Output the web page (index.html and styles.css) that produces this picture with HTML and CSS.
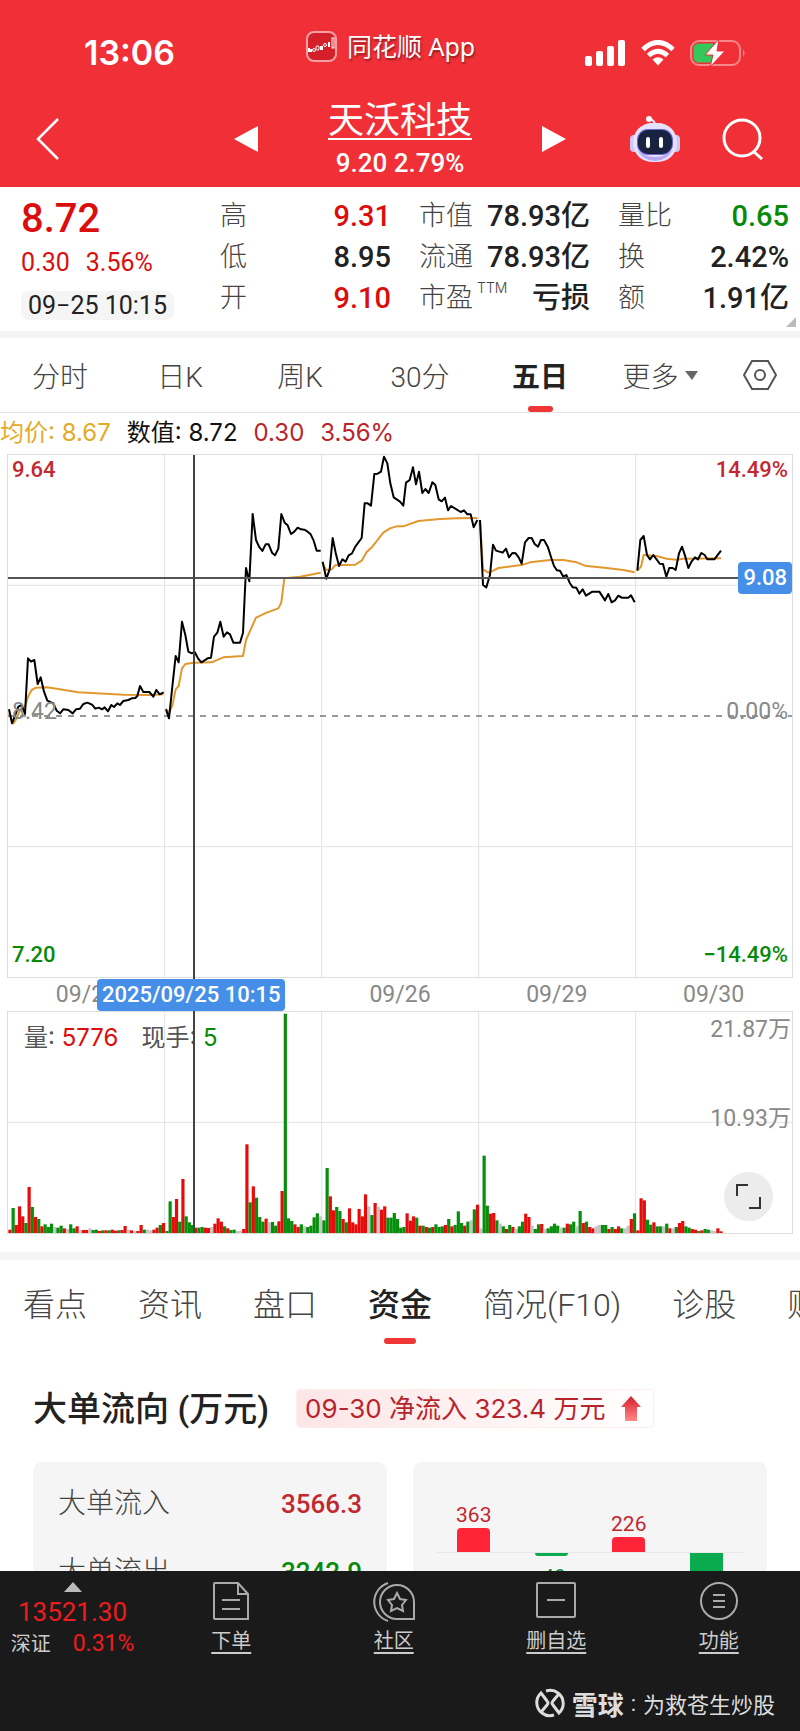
FILE: index.html
```html
<!DOCTYPE html>
<html lang="zh-CN">
<head>
  <meta charset="UTF-8" />
  <meta name="viewport" content="width=device-width, initial-scale=1.0"/>
  <title>天沃科技</title>
  <link rel="stylesheet" href="styles.css">
</head>
<body>

  <header class="header">
    <div class="status-bar">
      <div class="clock">13:06</div>
      <div class="app-name">
        <svg width="31" height="31" viewBox="0 0 31 31">
          <rect x="1" y="1" width="29" height="29" rx="7" fill="#d3202a" stroke="#f7a0a3" stroke-width="2"/>
          <path d="M3 17v4M5 18v3M23 11v5" stroke="#fff" stroke-width="2"/>
          <g fill="none" stroke="#fff" stroke-width="1"><circle cx="8" cy="19" r="1.5"/><rect x="10" y="15" width="3" height="4" rx="1"/><circle cx="19" cy="14" r="1.5"/><rect x="26" y="7" width="2" height="10"/></g>
          <rect x="14" y="15" width="3" height="4" fill="#fff"/>
        </svg>
        <span>同花顺 App</span>
      </div>
      <div class="status-icons">
        <svg width="41" height="26" viewBox="0 0 41 26" fill="#fff">
          <rect x="0" y="16" width="7" height="10" rx="2"/>
          <rect x="11" y="11" width="7" height="15" rx="2"/>
          <rect x="22" y="6" width="7" height="20" rx="2"/>
          <rect x="33" y="0" width="7" height="26" rx="2"/>
        </svg>
        <svg width="34" height="26" viewBox="0 0 34 26" fill="none" stroke="#fff" stroke-width="5">
          <path d="M2 9.500Q17 -4.500 32 9.500"/>
          <path d="M7.500 15.500Q17 7 26.500 15.500"/>
          <path d="M17 25.500L11.500 19.500Q17 15 22.500 19.500Z" fill="#fff" stroke="none"/>
        </svg>
        <svg width="56" height="28" viewBox="0 0 56 28">
          <rect x="1" y="2" width="49" height="24" rx="8" fill="none" stroke="#f7898d" stroke-width="2"/>
          <path d="M9 4.500H23V23.500H9Q3.500 23.500 3.500 18V10Q3.500 4.500 9 4.500Z" fill="#34c759"/>
          <path d="M53 10Q56 14 53 18Z" fill="#f7898d"/>
          <path d="M29 0L15 16H23L20 28L35 12H27Z" fill="#fff" stroke="#f12f37" stroke-width="1"/>
        </svg>
      </div>
    </div>

    <div class="title-bar">
      <button class="icon-btn" aria-label="返回">
        <svg width="24" height="42" viewBox="0 0 24 42" fill="none" stroke="#fff" stroke-width="2.500"><path d="M22 1L2 21L22 41"/></svg>
      </button>
      <div class="stock">
        <button class="icon-btn" aria-label="上一只">
          <svg width="24" height="26" viewBox="0 0 24 26"><path d="M24 0V26L0 13Z" fill="#fff"/></svg>
        </button>
        <div class="stock-title">
          <h1>天沃科技</h1>
          <p>9.20 2.79%</p>
        </div>
        <button class="icon-btn" aria-label="下一只">
          <svg width="24" height="26" viewBox="0 0 24 26"><path d="M0 0V26L24 13Z" fill="#fff"/></svg>
        </button>
      </div>
      <div class="title-actions">
        <button class="icon-btn" aria-label="助手">
          <svg width="50" height="46" viewBox="0 0 50 46">
            <path d="M25 9Q25 4 19 3" fill="none" stroke="#e9e4ff" stroke-width="2"/>
            <circle cx="19" cy="3" r="3" fill="#fff"/>
            <rect x="0" y="19" width="8" height="17" rx="4" fill="#cfc6f5"/>
            <rect x="42" y="19" width="8" height="17" rx="4" fill="#cfc6f5"/>
            <rect x="3" y="7" width="44" height="39" rx="19" fill="#e6e2fb"/>
            <path d="M7 34Q14 45 25 45Q36 45 43 34Q36 41 25 41Q14 41 7 34Z" fill="#b7a8ef"/>
            <rect x="7" y="13" width="36" height="26" rx="11" fill="#6b63d8"/>
            <rect x="8" y="14" width="34" height="24" rx="10" fill="#17233f"/>
            <rect x="16" y="21" width="4" height="11" rx="2" fill="#fff"/>
            <rect x="29" y="21" width="4" height="11" rx="2" fill="#fff"/>
          </svg>
        </button>
        <button class="icon-btn" aria-label="搜索">
          <svg width="42" height="42" viewBox="0 0 42 42" fill="none" stroke="#fff" stroke-width="3"><circle cx="20" cy="20" r="18"/><path d="M31 33L40 41"/></svg>
        </button>
      </div>
    </div>
  </header>

  <main class="content">
    <section class="quote">
      <div class="quote-main">
        <strong class="red">8.72</strong>
        <p class="red"><span>0.30</span><span>3.56%</span></p>
        <time>09−25 10:15</time>
      </div>
      <dl class="quote-col">
        <div><dt>高</dt><dd class="red">9.31</dd></div>
        <div><dt>低</dt><dd>8.95</dd></div>
        <div><dt>开</dt><dd class="red">9.10</dd></div>
      </dl>
      <dl class="quote-col">
        <div><dt>市值</dt><dd>78.93亿</dd></div>
        <div><dt>流通</dt><dd>78.93亿</dd></div>
        <div><dt>市盈<sup>TTM</sup></dt><dd>亏损</dd></div>
      </dl>
      <dl class="quote-col">
        <div><dt>量比</dt><dd class="green">0.65</dd></div>
        <div><dt>换</dt><dd>2.42%</dd></div>
        <div><dt>额</dt><dd>1.91亿</dd></div>
      </dl>
      <span class="corner"></span>
    </section>

    <nav class="period-tabs">
      <button>分时</button>
      <button>日K</button>
      <button>周K</button>
      <button>30分</button>
      <button class="active">五日</button>
      <button>更多<svg width="13" height="9" viewBox="0 0 13 9"><path d="M0 0H13L7 9Z" fill="#666"/></svg></button>
      <button aria-label="设置">
        <svg width="36" height="32" viewBox="0 0 36 32" fill="none" stroke="#555" stroke-width="2"><path d="M10 2H26L34 16L26 30H10L2 16Z"/><circle cx="18" cy="16" r="5"/></svg>
      </button>
    </nav>

    <p class="legend">
      <span class="orange">均价: 8.67</span>
      <span class="black">数值: 8.72</span>
      <span>0.30</span>
      <span>3.56%</span>
    </p>

    <section class="charts">
      <div class="price-chart">
        <svg id="priceSvg" viewBox="24 45 2352 1566" preserveAspectRatio="none">
          <path class="grid" d="M494 45V1611M965 45V1611M1436 45V1611M1907 45V1611M24 436H2376M24 1220H2376"/>
          <path class="zero" d="M24 828H2376"/>
        </svg>
        <span class="label top left up">9.64</span>
        <span class="label top right up">14.49%</span>
        <span class="label middle left">8.42</span>
        <span class="label middle right">0.00%</span>
        <span class="label bottom left green">7.20</span>
        <span class="label bottom right green">−14.49%</span>
        <div class="cross-h"></div>
        <span class="tag price-tag">9.08</span>
      </div>

      <div class="dates">
        <span>09/24</span>
        <span>09/25</span>
        <span>09/26</span>
        <span>09/29</span>
        <span>09/30</span>
      </div>

      <div class="volume-chart">
        <svg id="volumeSvg" viewBox="24 0 2352 663" preserveAspectRatio="none">
          <path class="grid" d="M494 0V663M965 0V663M1436 0V663M1907 0V663M24 331H2376"/>
        </svg>
        <p class="volume-legend">
          <span>量: <b class="red">5776</b></span>
          <span>现手: <b class="green">5</b></span>
        </p>
        <span class="label vol-max">21.87万</span>
        <span class="label vol-mid">10.93万</span>
        <button class="fullscreen" aria-label="全屏">
          <svg width="25" height="25" viewBox="0 0 25 25" fill="none" stroke="#333" stroke-width="2"><path d="M1 12V1H12M24 13V24H13"/></svg>
        </button>
      </div>
      <div class="cross-v"></div>
      <span class="tag date-tag">2025/09/25 10:15</span>
    </section>

    <nav class="info-tabs">
      <button>看点</button>
      <button>资讯</button>
      <button>盘口</button>
      <button class="active">资金</button>
      <button>简况(F10)</button>
      <button>诊股</button>
      <button>财务</button>
    </nav>

    <section class="flow">
      <div class="flow-head">
        <h2>大单流向 (万元)</h2>
        <p class="badge">
          09-30 净流入 323.4 万元
          <svg width="20" height="26" viewBox="0 0 20 26">
            <defs><linearGradient id="arrow" x1="0" y1="0" x2="0" y2="1"><stop offset="0" stop-color="#d61f29"/><stop offset="1" stop-color="#f88"/></linearGradient></defs>
            <path d="M10 0L20 11H16V25H4V11H0Z" fill="url(#arrow)"/>
          </svg>
        </p>
      </div>
      <div class="cards">
        <dl class="card flow-list">
          <div><dt>大单流入</dt><dd class="up">3566.3</dd></div>
          <div><dt>大单流出</dt><dd class="green">3242.9</dd></div>
        </dl>
        <div class="card flow-bars">
          <div class="plus"><span>363</span><i style="height:24px"></i></div>
          <div class="minus"><i style="height:3px"></i><span>-49</span></div>
          <div class="plus"><span>226</span><i style="height:15px"></i></div>
          <div class="minus"><i style="height:48px"></i></div>
        </div>
      </div>
    </section>
  </main>

  <footer class="footer">
    <div class="toolbar">
      <div class="index">
        <svg width="18" height="10" viewBox="0 0 18 10"><path d="M9 0L18 10H0Z" fill="#bbb"/></svg>
        <strong>13521.30</strong>
        <p>深证 <b>0.31%</b></p>
      </div>
      <a href="#">
        <svg width="36" height="38" viewBox="0 0 36 38" fill="none" stroke="#aaa" stroke-width="2"><path d="M2 1H25L35 12V37H2Q1 37 1 36V2Q1 1 2 1ZM25 1V12H35M9 18H27M9 27H27"/></svg>
        下单
      </a>
      <a href="#">
        <svg width="42" height="40" viewBox="0 0 42 40" fill="none" stroke="#aaa" stroke-width="2"><path d="M15 1A20 20 0 0 0 15 39M41 37H24A17 17 0 1 1 41 20Z"/><path d="M24 11L27 17L33 18L29 23L30 29L24 26L18 29L19 23L15 18L21 17Z"/></svg>
        社区
      </a>
      <a href="#">
        <svg width="40" height="36" viewBox="0 0 40 36" fill="none" stroke="#aaa" stroke-width="2"><rect x="1" y="1" width="38" height="34" rx="1"/><path d="M11 18H29"/></svg>
        删自选
      </a>
      <a href="#">
        <svg width="38" height="38" viewBox="0 0 38 38" fill="none" stroke="#aaa" stroke-width="2"><circle cx="19" cy="19" r="18"/><path d="M13 13H25M13 19H25M13 25H25"/></svg>
        功能
      </a>
    </div>
    <p class="source">
      <svg width="30" height="30" viewBox="0 0 30 30" fill="none" stroke="#ddd" stroke-width="3"><path d="M7 23L12 17Q14 15 12 13L6 5A13 13 0 0 0 7 25Q12 29 19 27"/><path d="M23 7L18 13Q16 15 18 17L24 25A13 13 0 0 0 23 5Q18 1 11 3"/></svg>
      <b>雪球</b><span>:</span><span>为救苍生炒股</span>
    </p>
  </footer>

  <script src="script.js"></script>
</body>
</html>
```

FILE: styles.css
```css
* {
  box-sizing: border-box;
}

body {
  margin: 0;
  height: 100vh;
  display: flex;
  flex-direction: column;
  overflow: hidden;
  background: #fff;
  color: #222;
  font-family: Roboto, 'Noto Sans CJK SC', sans-serif;
}

h1, h2, p, dl, dd {
  margin: 0;
}

button {
  padding: 0;
  border: 0;
  background: none;
  color: inherit;
  font: inherit;
}

svg {
  display: block;
}

.red { color: #dc0d0d; }
.green { color: #078a07; }
.up { color: #c3272f; }
.orange { color: #e3ab27; }
.black { color: #111; }

/* header */
.header {
  flex: none;
  height: 187px;
  background: #f12f37;
  color: #fff;
}

.status-bar {
  display: grid;
  grid-template-columns: 222px auto 1fr;
  align-items: center;
  height: 92px;
  padding: 14px 54px 0 84px;
}

.clock {
  font: 600 34px/40px Inter, sans-serif;
}

.app-name {
  display: flex;
  align-items: center;
  gap: 10px;
  height: 40px;
  margin-bottom: 14px;
  font: 25px/36px 'Noto Sans', 'Noto Sans CJK SC', sans-serif;
  text-shadow: 1px 2px 2px rgba(0,0,0,0.4);
}

.status-icons {
  display: flex;
  align-items: center;
  justify-content: flex-end;
  gap: 15px;
}

.title-bar {
  display: grid;
  grid-template-columns: 1fr auto 1fr;
  align-items: center;
  height: 95px;
  padding: 0 36px 4px;
}

.stock {
  display: flex;
  align-items: center;
  gap: 70px;
}

.stock-title {
  text-align: center;
}

.stock-title h1 {
  height: 44px;
  margin-top: 4px;
  border-bottom: 2px solid #fff;
  font: 36px/42px 'Noto Sans CJK SC', sans-serif;
}

.stock-title p {
  font-size: 26px;
  font-weight: 500;
  line-height: 46px;
}

.title-actions {
  display: flex;
  align-items: center;
  justify-content: flex-end;
  gap: 42px;
}

/* quote */
.content {
  flex: 1;
  min-height: 0;
  overflow: hidden;
}

.quote {
  position: relative;
  display: grid;
  grid-template-columns: repeat(4, 1fr);
  gap: 28px;
  padding: 9px 11px 11px 21px;
  border-bottom: 7px solid #f5f5f5;
}

.quote-main {
  display: flex;
  flex-direction: column;
  align-items: flex-start;
  white-space: nowrap;
}

.quote-main strong {
  font-size: 40px;
  font-weight: 500;
  line-height: 46px;
}

.quote-main p {
  display: flex;
  gap: 16px;
  font-size: 25px;
  line-height: 42px;
}

.quote-main time {
  margin-top: 7px;
  padding: 0 7px;
  border-radius: 8px;
  background: #f5f5f5;
  font-size: 25px;
  line-height: 29px;
}

.quote-col div {
  display: flex;
  justify-content: space-between;
  height: 41px;
  line-height: 41px;
  white-space: nowrap;
}

.quote-col dt {
  color: #444;
  font-size: 27px;
  font-weight: 300;
}

.quote-col dd {
  font-size: 29px;
  font-weight: 500;
}

.quote-col sup {
  position: absolute;
  margin-left: 4px;
  font: 300 14px/20px Inter, sans-serif;
}

.corner {
  position: absolute;
  right: 4px;
  bottom: 4px;
  border: 5px solid #bbb;
  border-top-color: transparent;
  border-left-color: transparent;
}

/* period tabs */
.period-tabs {
  display: grid;
  grid-template-columns: repeat(6, 3fr) 2fr;
  height: 75px;
  border-bottom: 1px solid #e5e5e5;
  color: #444;
  font-size: 28px;
  font-weight: 300;
}

.period-tabs button {
  position: relative;
  display: flex;
  align-items: center;
  justify-content: center;
  gap: 6px;
}

.period-tabs .active,
.info-tabs .active {
  position: relative;
  color: #222;
  font-weight: 700;
}

.active::after {
  content: "";
  position: absolute;
  left: 50%;
  bottom: 0;
  width: 25px;
  height: 6px;
  margin-left: -12px;
  border-radius: 3px;
  background: #ee3634;
}

.legend {
  display: flex;
  gap: 16px;
  height: 42px;
  font: 24px/40px Inter, 'Noto Sans CJK SC', sans-serif;
  color: #b8242c;
}

/* charts */
.charts {
  position: relative;
  padding: 0 8px;
  margin-bottom: 19px;
}

.price-chart,
.volume-chart {
  position: relative;
  height: 522px;
  outline: 1px solid #ddd;
}

.volume-chart {
  height: 221px;
}

.charts > div > svg {
  width: 100%;
  height: 100%;
}

.charts path {
  vector-effect: non-scaling-stroke;
}

.grid {
  fill: none;
  stroke: #e2e2e2;
  stroke-width: 1;
}

.zero {
  stroke: #777;
  stroke-width: 1.500;
  stroke-dasharray: 6 6;
}

.price-line,
.avg-line {
  fill: none;
  stroke: #000;
  stroke-width: 2;
  stroke-linejoin: round;
}

.avg-line {
  stroke: #e2982c;
}

.label {
  position: absolute;
  font-size: 23px;
  line-height: 28px;
  color: #888;
}

.label.up,
.label.green {
  font-size: 22px;
  font-weight: 500;
}

.label.up { color: #c3272f; }
.label.green { color: #078a07; }
.left { left: 4px; }
.right { right: 4px; }
.top { top: 1px; }
.middle { top: 243px; }
.bottom { bottom: 8px; }

.cross-h {
  position: absolute;
  top: 122px;
  left: 0;
  right: 0;
  height: 2px;
  background: #555;
}

.cross-v {
  position: absolute;
  top: 0;
  bottom: 0;
  left: 24.125%;
  width: 2px;
  background: #444;
}

.tag {
  position: absolute;
  padding: 0 5px;
  border-radius: 4px;
  background: #458fe8;
  color: #fff;
  font-size: 22px;
  font-weight: 500;
  line-height: 32px;
}

.price-tag {
  top: 107px;
  right: 0;
}

.date-tag {
  top: 524px;
  left: 97px;
}

.dates {
  display: grid;
  grid-template-columns: repeat(5, 1fr);
  height: 35px;
  color: #888;
  font-size: 23px;
  line-height: 35px;
  text-align: center;
}

.volume-legend {
  position: absolute;
  top: 10px;
  left: 16px;
  display: flex;
  gap: 23px;
  color: #555;
  font: 24px/32px Inter, 'Noto Sans CJK SC', sans-serif;
}

.volume-legend b {
  font-weight: 400;
}

.vol-max {
  top: 4px;
  right: 1px;
}

.vol-mid {
  top: 93px;
  right: 1px;
}

.fullscreen {
  position: absolute;
  right: 19px;
  bottom: 12px;
  display: flex;
  align-items: center;
  justify-content: center;
  width: 49px;
  height: 49px;
  border-radius: 50%;
  background: #ececec;
}

/* info tabs */
.info-tabs {
  display: flex;
  gap: 51px;
  height: 92px;
  padding-left: 23px;
  border-top: 8px solid #f5f5f5;
  color: #444;
  font-size: 32px;
  font-weight: 300;
  white-space: nowrap;
}

.info-tabs .active {
  font-weight: 500;
}

.info-tabs .active::after {
  width: 32px;
  margin-left: -16px;
}

/* money flow */
.flow {
  padding: 45px 33px 0;
}

.flow-head {
  display: flex;
  align-items: center;
  gap: 27px;
  height: 39px;
}

.flow-head h2 {
  font-size: 34px;
  font-weight: 500;
  line-height: 36px;
}

.badge {
  display: flex;
  align-items: center;
  gap: 16px;
  height: 39px;
  padding: 0 12px 0 8px;
  border: 1px solid #fdeeee;
  border-radius: 4px;
  background: linear-gradient(90deg, #fde5e6, #fff);
  color: #b8242c;
  font: 26px/37px Inter, 'Noto Sans CJK SC', sans-serif;
}

.cards {
  display: grid;
  grid-template-columns: 1fr 1fr;
  gap: 26px;
  margin-top: 34px;
}

.card {
  height: 240px;
  border-radius: 9px;
  background: #f5f5f5;
}

.flow-list {
  padding: 8px 25px;
}

.flow-list div {
  display: flex;
  justify-content: space-between;
  font-size: 28px;
  line-height: 68px;
}

.flow-list dt {
  color: #444;
  font-weight: 300;
}

.flow-list dd {
  font-size: 26px;
  font-weight: 500;
}

.flow-bars {
  display: grid;
  grid-template-columns: repeat(4, 1fr);
  padding: 0 22px;
  background: linear-gradient(#e8e8e8, #e8e8e8) center 90px / 306px 1px no-repeat #f5f5f5;
  font-size: 21px;
  line-height: 26px;
}

.flow-bars div {
  display: flex;
  flex-direction: column;
  align-items: center;
}

.flow-bars i {
  width: 33px;
}

.plus {
  height: 90px;
  justify-content: flex-end;
  color: #c3272f;
}

.plus i {
  border-radius: 4px 4px 0 0;
  background: #ff2438;
}

.minus {
  padding-top: 91px;
  gap: 8px;
  color: #0a8f45;
}

.minus i {
  border-radius: 0 0 4px 4px;
  background: #0aab4f;
}

/* footer */
.footer {
  flex: none;
  height: 160px;
  background: #1a1a1a;
  color: #ccc;
}

.toolbar {
  display: grid;
  grid-template-columns: 150px repeat(4, 1fr);
  height: 115px;
}

.toolbar a {
  display: flex;
  flex-direction: column;
  align-items: center;
  justify-content: space-between;
  height: 84px;
  padding-top: 11px;
  color: #ccc;
  font-size: 20px;
  line-height: 28px;
  text-underline-offset: 4px;
}

.index {
  display: flex;
  flex-direction: column;
  align-items: center;
  padding: 11px 5px 0 0;
}

.index strong {
  color: #ee1c1c;
  font-size: 26px;
  font-weight: 400;
  line-height: 40px;
}

.index p {
  display: flex;
  gap: 22px;
  font-size: 20px;
  line-height: 24px;
}

.index b {
  color: #ee1c1c;
  font-size: 23px;
  font-weight: 400;
}

.source {
  display: flex;
  align-items: center;
  justify-content: flex-end;
  gap: 7px;
  height: 34px;
  padding-right: 25px;
  color: #ddd;
  font-size: 22px;
}

.source b {
  font-size: 26px;
}
```

FILE: script.js
```js
// one entry per trading day
const prices = [
  "27,808 36,850 46,825 55,800 65,795 75,822 84,655 93,665 103,660 113,732 122,712 132,755 142,782 160,790 170,812 180,820 190,808 205,810 218,820 228,808 240,806 250,792 262,788 276,794 286,806 296,803 306,808 314,802 324,814 334,795 342,801 352,790 360,795 370,783 385,780 395,775 406,774 412,768 420,738 430,756 448,756 460,770 469,750 479,763 491,757",
  "498,808 507,835 517,740 527,648 536,667 546,545 556,585 565,635 575,640 584,636 594,655 604,667 623,655 633,653 642,590 652,578 661,545 671,590 681,577 690,583 700,608 720,608 729,578 738,384 748,424 758,222 768,300 777,320 787,333 797,313 806,313 816,338 825,346 835,326 844,222 854,248 863,256 873,282 883,275 893,263 903,268 913,269 923,275 932,283 941,302 950,332 962,332",
  "968,365 979,416 989,388 998,294 1008,343 1017,378 1027,358 1037,365 1046,346 1056,340 1066,320 1085,294 1094,190 1103,190 1113,197 1123,102 1133,101 1143,95 1152,50 1162,70 1171,130 1181,172 1200,185 1210,197 1218,128 1229,120 1239,82 1248,133 1257,95 1267,159 1276,147 1286,159 1297,127 1306,135 1316,178 1325,184 1335,173 1344,211 1353,198 1382,216 1392,211 1402,223 1412,223 1421,262 1432,240",
  "1440,240 1449,435 1459,442 1470,405 1479,314 1488,332 1508,338 1518,326 1527,352 1537,339 1547,340 1556,352 1565,371 1575,307 1586,294 1595,294 1604,312 1614,320 1623,300 1632,300 1644,322 1654,354 1662,378 1671,391 1680,392 1690,410 1699,405 1709,428 1718,442 1729,443 1738,461 1748,448 1758,467 1777,455 1798,455 1815,481 1825,462 1835,487 1845,481 1855,467 1865,473 1885,473 1893,466 1904,487",
  "1912,392 1921,300 1931,288 1941,345 1950,358 1960,345 1979,371 1989,372 1999,410 2008,384 2018,384 2027,390 2037,340 2046,320 2056,350 2065,384 2075,364 2085,352 2094,358 2104,339 2114,345 2122,358 2143,358 2163,332"
];

const averages = [
  "27,820 40,850 50,835 60,810 75,800 85,768 95,750 108,743 140,742 160,745 235,757 370,764 450,765 490,763",
  "498,806 507,820 517,797 527,748 536,738 546,685 556,672 580,668 635,667 670,652 729,648 738,600 768,533 800,518 835,505 844,487 853,415 900,410 962,398",
  "968,372 979,390 995,388 1005,376 1066,374 1085,362 1100,336 1117,320 1150,278 1170,265 1190,259 1210,259 1255,243 1320,237 1370,235 1432,234",
  "1440,240 1449,388 1465,398 1480,392 1495,384 1570,374 1590,367 1650,360 1690,360 1730,367 1755,377 1820,384 1870,390 1904,397",
  "1912,392 1923,380 1931,345 1970,348 2000,356 2030,359 2050,356 2163,355"
];

// r = up, g = down, n = flat
const volumes = [
  "r10 g75 r24 r80 r50 g30 r138 g78 r48 g42 r20 g26 g18 g28 n18 g16 g22 r14 n12 g26 g14 r20 n10 r9 r9 n14 g9 g10 r6 g8 r8 g8 r10 r7 g8 r9 r21 n10 r8 n6 r6 r24 g10 n10 n8 r10 r16 g24 r30",
  "g6 g95 r48 r102 g34 r162 g50 g32 g24 r16 g16 g18 r16 r15 n18 r28 r44 r34 g20 r14 g9 g10 n6 n7 r12 r266 g92 r140 g106 g48 g34 r43 n32 g33 g22 r35 r126 g658 g44 g36 r26 r18 g26 n20 g18 g22 g47 g59 n50",
  "g38 g195 r110 r68 g78 g66 r42 g32 r74 r32 r26 r72 r50 r116 n80 g54 r90 n78 r70 r80 g46 g46 g60 g42 g16 g18 r59 r37 r50 g46 r22 g22 r18 g16 r18 g26 g18 g20 r24 g42 r20 g24 g65 g30 r22 g34 n38 g71 r85",
  "n14 g232 g82 r58 r60 g38 n28 g20 r12 g24 r18 n12 g20 g34 r58 r48 n22 g12 g26 r27 n12 g14 g20 g28 g22 n16 g16 r28 g26 g34 n20 g66 r30 g34 r18 r14 n20 n24 g24 g24 r12 g18 r12 r20 g14 n14 n22 r42 g59",
  "r8 r104 r98 g40 g25 r32 g20 g20 n20 g28 r14 n14 g18 r30 r36 g20 g16 r12 r10 g6 r8 g12 g10 n8 n6 r14 r5"
];

const colors = { r: "#e60c0c", g: "#078f0b", n: "#c4c4c4" };

function drawLines(days, className) {
  const svg = document.getElementById("priceSvg");
  days.forEach(points => {
    svg.innerHTML += `<path class="${className}" d="M${points.split(" ").join("L")}"/>`;
  });
}

function drawVolume() {
  let bars = "";
  volumes.forEach((day, d) => {
    day.split(" ").forEach((bar, i) => {
      const h = Number(bar.slice(1));
      bars += `<rect x="${25 + d * 471 + i * 9.6}" y="${663 - h}" width="9.6" height="${h}" fill="${colors[bar[0]]}"/>`;
    });
  });
  document.getElementById("volumeSvg").innerHTML += bars;
}

drawLines(averages, "avg-line");
drawLines(prices, "price-line");
drawVolume();
```
